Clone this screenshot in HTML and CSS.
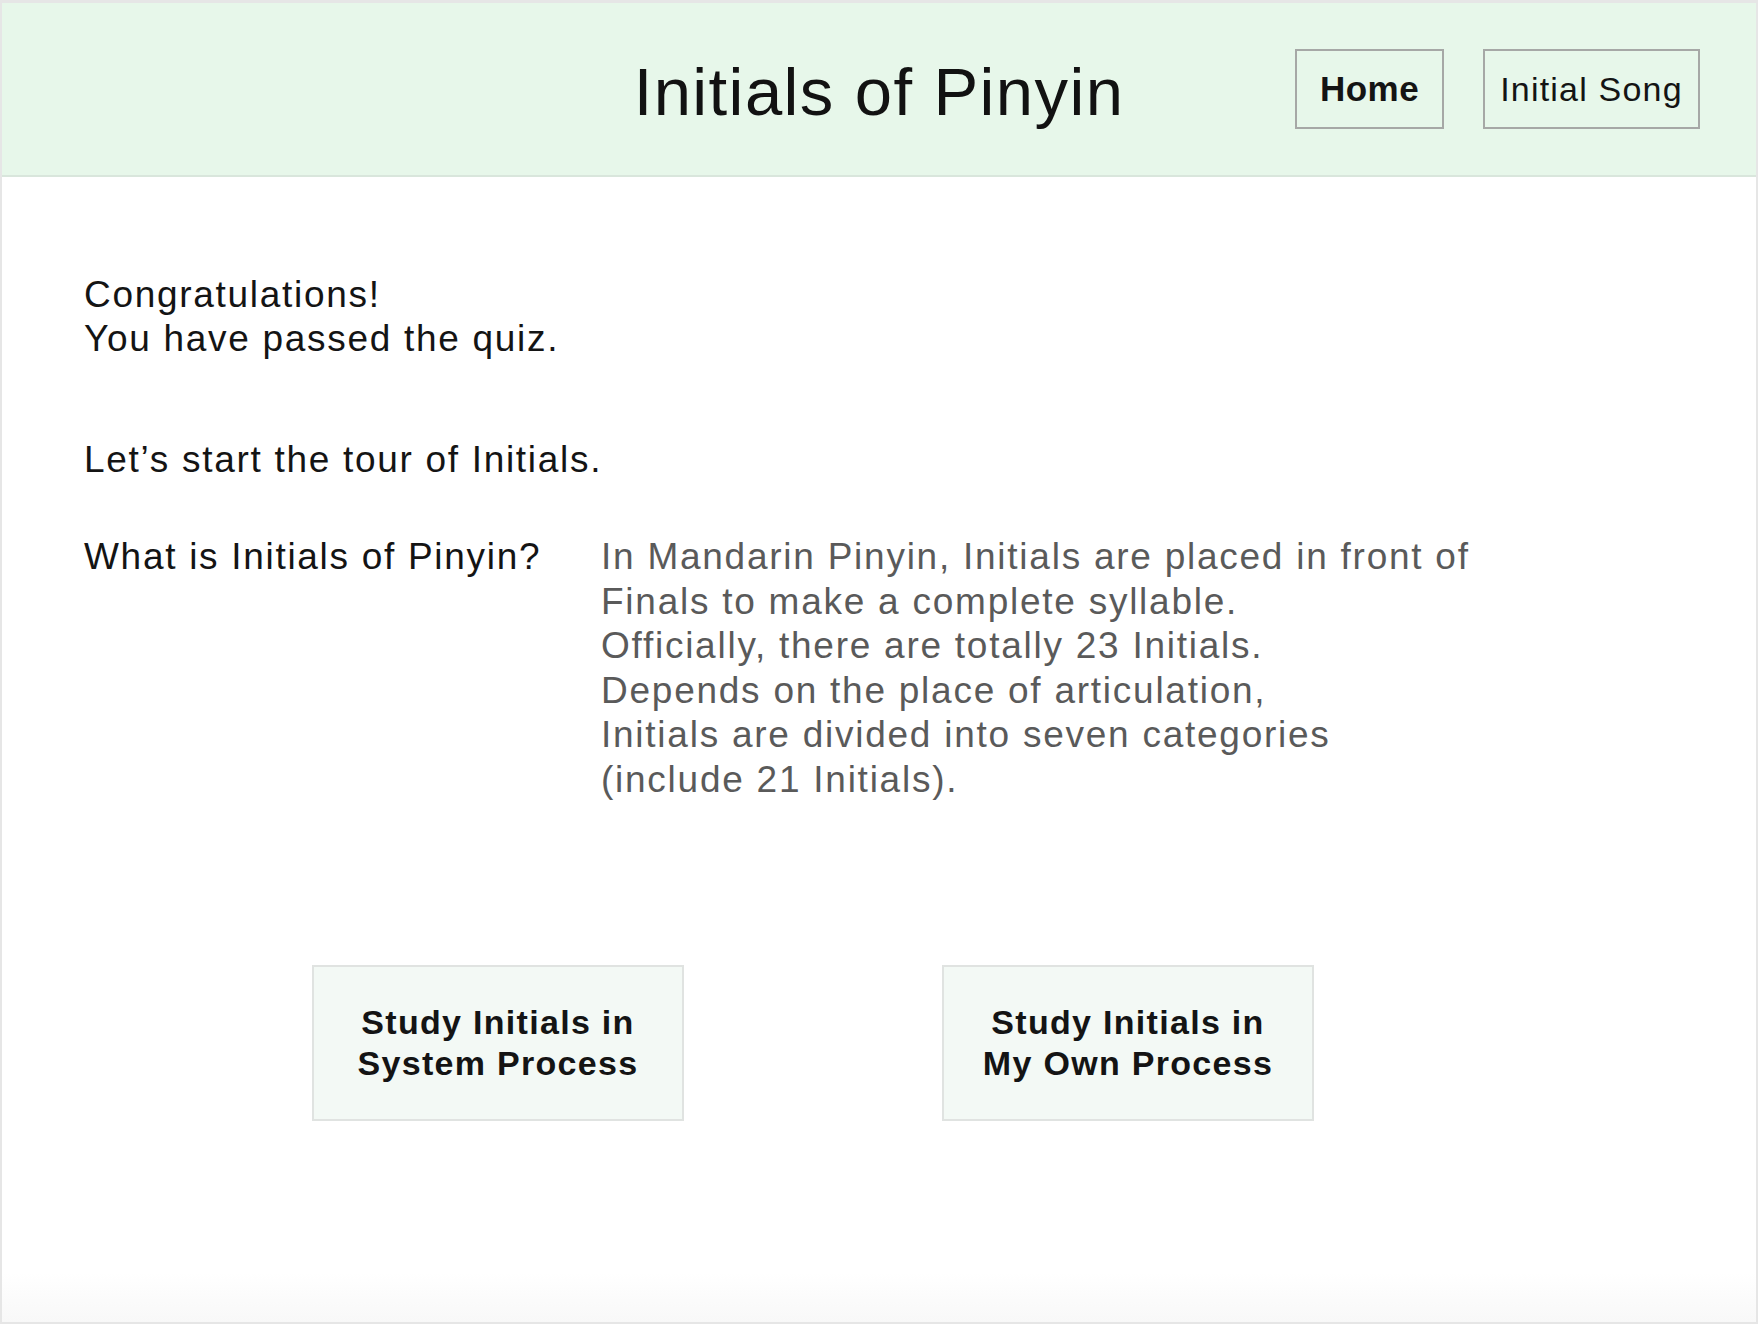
FILE: index.html
```html
<!DOCTYPE html>
<html lang="en">
<head>
<meta charset="utf-8">
<title>Initials of Pinyin</title>
<link rel="stylesheet" href="styles.css">
</head>
<body>
<div class="page">
  <header class="topbar">
    <div class="spacer"></div>
    <h1 class="title">Initials of Pinyin</h1>
    <nav class="nav">
      <a class="nav-btn nav-home" href="#">Home</a>
      <a class="nav-btn" href="#">Initial Song</a>
    </nav>
  </header>
  <main class="content">
    <p class="congrats">Congratulations!<br>You have passed the quiz.</p>
    <p class="start">Let’s start the tour of Initials.</p>
    <section class="what">
      <div class="what-label">What is Initials of Pinyin?</div>
      <p class="what-text">In Mandarin Pinyin, Initials are placed in front of<br>Finals to make a complete syllable.<br>Officially, there are totally 23 Initials.<br>Depends on the place of articulation,<br>Initials are divided into seven categories<br>(include 21 Initials).</p>
    </section>
    <div class="choices">
      <a class="choice" href="#">Study Initials in<br>System Process</a>
      <a class="choice" href="#">Study Initials in<br>My Own Process</a>
    </div>
  </main>
</div>
</body>
</html>
```

FILE: styles.css
```css
html, body {
  margin: 0;
  padding: 0;
  background: #ffffff;
}
body {
  font-family: "Liberation Sans", Arial, sans-serif;
  color: #141414;
}
.page {
  box-sizing: border-box;
  width: 1758px;
  height: 1324px;
  border: 2px solid #e6e6e6;
  border-top-width: 3px;
  display: flex;
  flex-direction: column;
  background: linear-gradient(to bottom, #ffffff 0, #ffffff 1270px, #f8f8f8 100%);
}
.topbar {
  box-sizing: border-box;
  height: 174px;
  background: #e7f7ea;
  border-bottom: 2px solid #d9e6dc;
  display: grid;
  grid-template-columns: 1fr auto 1fr;
  align-items: center;
}
.title {
  margin: 0;
  font-size: 67px;
  font-weight: 400;
  letter-spacing: 1.4px;
  color: #121212;
  line-height: 1;
  padding-top: 4px;
}
.nav {
  justify-self: end;
  display: flex;
  gap: 39px;
  padding-right: 56px;
}
.nav-btn {
  box-sizing: border-box;
  height: 80px;
  display: flex;
  align-items: center;
  justify-content: center;
  border: 2px solid #a6a8a6;
  color: #141414;
  text-decoration: none;
  font-size: 34px;
  letter-spacing: 1.2px;
  width: 217px;
}
.nav-home {
  width: 149px;
  font-weight: 700;
  font-size: 35px;
  letter-spacing: 0.5px;
}
.content {
  flex: 1;
  padding: 96px 0 0 82px;
}
.content p {
  margin: 0;
}
.congrats,
.start,
.what-label {
  font-size: 37px;
  line-height: 44px;
  letter-spacing: 1.7px;
}
.start {
  margin-top: 77px !important;
}
.what {
  display: flex;
  margin-top: 53px;
}
.what-label {
  width: 517px;
  line-height: 44.6px;
}
.what-text {
  font-size: 37px;
  line-height: 44.6px;
  letter-spacing: 1.75px;
  color: #5a5a5a;
}
.choices {
  display: flex;
  gap: 258px;
  margin-top: 162px;
  margin-left: 228px;
}
.choice {
  box-sizing: border-box;
  width: 372px;
  height: 156px;
  display: flex;
  align-items: center;
  justify-content: center;
  text-align: center;
  background: #f3f9f5;
  border: 2px solid #e0e3e1;
  color: #141414;
  text-decoration: none;
  font-weight: 700;
  font-size: 34px;
  line-height: 41px;
  letter-spacing: 1.3px;
}
```
